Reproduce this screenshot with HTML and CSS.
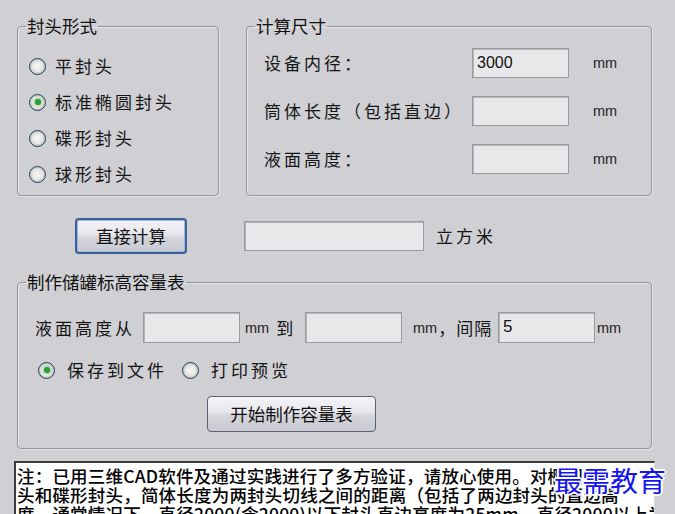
FILE: index.html
```html
<!DOCTYPE html>
<html lang="zh-CN">
<head>
<meta charset="utf-8">
<title>储罐容量计算</title>
<link rel="stylesheet" href="styles.css">
</head>
<body>
<div class="app">
  <div class="top">
    <fieldset class="grp grp-head">
      <legend>封头形式</legend>
      <div class="radios">
        <label class="radio"><span class="dot"></span><span class="rtext">平封头</span></label>
        <label class="radio"><span class="dot on"></span><span class="rtext">标准椭圆封头</span></label>
        <label class="radio"><span class="dot"></span><span class="rtext">碟形封头</span></label>
        <label class="radio"><span class="dot"></span><span class="rtext">球形封头</span></label>
      </div>
    </fieldset>
    <fieldset class="grp grp-size">
      <legend>计算尺寸</legend>
      <div class="size-grid">
        <span class="lbl">设备内径：</span><span class="inp">3000</span><span class="unit">mm</span>
        <span class="lbl">筒体长度（包括直边）</span><span class="inp"></span><span class="unit">mm</span>
        <span class="lbl">液面高度：</span><span class="inp"></span><span class="unit">mm</span>
      </div>
    </fieldset>
  </div>

  <div class="calc-row">
    <button class="btn btn-default">直接计算</button>
    <span class="inp out"></span>
    <span class="lbl">立方米</span>
  </div>

  <fieldset class="grp grp-table">
    <legend>制作储罐标高容量表</legend>
    <div class="table-body">
      <div class="range-row">
        <span class="lbl">液面高度从</span>
        <span class="inp"></span>
        <span class="mm-to"><span class="unit">mm</span> <span class="cn">到</span></span>
        <span class="inp inp2"></span>
        <span class="mm-sep"><span class="unit">mm</span><span class="cn">，间隔</span></span>
        <span class="inp inp3">5</span>
        <span class="unit unit-end">mm</span>
      </div>
      <div class="opt-row">
        <label class="radio"><span class="dot on"></span><span class="rtext">保存到文件</span></label>
        <label class="radio"><span class="dot"></span><span class="rtext">打印预览</span></label>
      </div>
      <div class="make-row">
        <button class="btn">开始制作容量表</button>
      </div>
    </div>
  </fieldset>

  <div class="note">注：已用三维CAD软件及通过实践进行了多方验证，请放心使用。对椭圆封<br>头和碟形封头，简体长度为两封头切线之间的距离（包括了两边封头的直边高<br>度，通常情况下，直径2000(含2000)以下封头直边高度为25mm，直径2000以上为40mm）。</div>

  <div class="watermark">最需教育</div>
</div>
</body>
</html>
```

FILE: styles.css
```css
* { box-sizing: border-box; }

html, body {
  margin: 0;
  padding: 0;
  background: #cfcfd4;
  overflow: hidden;
}

.app {
  position: relative;
  width: 675px;
  height: 514px;
  overflow: hidden;
  font-family: "Noto Sans CJK SC", "Noto Sans", sans-serif;
  color: #141414;
}

/* ---------- group boxes ---------- */
.grp {
  margin: 0;
  min-width: 0;
  padding: 0;
  border: 1px solid #94949a;
  border-radius: 4px;
  box-shadow: 1px 1px 0 #e4e4e8, inset 1px 1px 0 #e4e4e8;
}

.grp legend {
  font-size: 17.5px;
  line-height: 18px;
  padding: 0 1px;
  margin-left: 8px;
  color: #111;
}

.top {
  display: flex;
  align-items: stretch;
  gap: 27px;
  padding: 17px 0 0 17px;
}

.grp-head {
  width: 202px;
}

.radios {
  display: flex;
  flex-direction: column;
  padding: 13px 0 3px 11px;
}

.radio {
  display: flex;
  align-items: center;
  gap: 9px;
  height: 36px;
}

.rtext {
  font-size: 17px;
  letter-spacing: 3px;
  line-height: 20px;
}

.dot {
  position: relative;
  flex: none;
  width: 17px;
  height: 17px;
  border-radius: 50%;
  border: 1.6px solid #28405a;
  background: radial-gradient(circle at 50% 50%, #f6f6f2 0, #e8e8e4 45%, #c4c8c6 100%);
  box-shadow: inset 0 0 2px #8e9aa6;
}

.dot.on::after {
  content: "";
  position: absolute;
  left: 50%;
  top: 50%;
  width: 6px;
  height: 6px;
  margin: -3px 0 0 -3px;
  border-radius: 50%;
  background: #2f9a3a;
  box-shadow: 0 0 2px 1px #8fd08f;
}

.grp-size {
  width: 406px;
}

.size-grid {
  display: grid;
  grid-template-columns: 208px 97px auto;
  column-gap: 0;
  row-gap: 18px;
  align-items: center;
  padding: 13px 0 20px 17px;
}

.size-grid .unit {
  margin-left: 24px;
}

.lbl {
  font-size: 17px;
  letter-spacing: 3px;
  line-height: 20px;
  white-space: nowrap;
}

.inp {
  display: block;
  height: 30px;
  width: 97px;
  background: #e8e8ea;
  border: 1px solid #9b9b9f;
  box-shadow: inset 1px 1px 0 #b4b4b8;
  font-family: "Liberation Sans", Arial, sans-serif;
  font-size: 16px;
  line-height: 28px;
  padding: 0 4px;
  color: #111;
}

.unit {
  font-family: "Liberation Sans", Arial, sans-serif;
  font-size: 14.5px;
  color: #222;
}

/* ---------- calc row ---------- */
.calc-row {
  display: flex;
  align-items: center;
  margin-top: 22px;
  padding-left: 75px;
}

.btn {
  font-family: "Noto Sans CJK SC", sans-serif;
  font-size: 17.5px;
  line-height: 20px;
  color: #111;
  border-radius: 4px;
  background: linear-gradient(#f4f4f7 0%, #e6e6ec 45%, #d4d4dc 55%, #c9c9d3 100%);
  border: 1px solid #5d6272;
  padding: 0;
  cursor: pointer;
}

.btn-default {
  width: 112px;
  height: 36px;
  border: 2px solid #3a5f9a;
  box-shadow: inset 0 0 0 1px #9fb8de;
}

.out {
  width: 180px;
  height: 30px;
  margin-left: 57px;
}

.calc-row .lbl {
  margin-left: 12px;
}

/* ---------- table group ---------- */
.grp-table {
  width: 635px;
  margin: 19px 0 0 17px;
}

.table-body {
  padding: 21px 0 16px 17px;
}

.range-row {
  display: flex;
  align-items: center;
}

.range-row .inp {
  height: 31px;
}

.range-row .lbl {
  width: 102px;
  margin-right: 6px;
}

.mm-to {
  margin-left: 5px;
  width: 60px;
  display: flex;
  align-items: center;
}

.mm-to .cn {
  margin-left: 7px;
}

.cn {
  font-size: 17px;
  line-height: 20px;
}

.mm-sep {
  margin-left: 11px;
  display: flex;
  align-items: center;
  width: 85px;
}

.mm-sep .cn {
  margin-left: 1px;
  letter-spacing: 1px;
}

.inp3 {
  font-size: 17px;
}

.unit-end {
  margin-left: 2px;
}

.opt-row {
  display: flex;
  align-items: center;
  margin-top: 15px;
  padding-left: 3px;
  gap: 15px;
}

.opt-row .radio {
  height: 24px;
  gap: 12px;
}

.make-row {
  margin-top: 14px;
  padding-left: 172px;
}

.make-row .btn {
  width: 169px;
  height: 36px;
}

/* ---------- note ---------- */
.note {
  margin: 12px 0 0 14px;
  width: 641px;
  height: 80px;
  background: #ffffff;
  border-top: 2px solid #3c3c3c;
  border-left: 2px solid #3c3c3c;
  border-right: 1px solid #d8d8d8;
  padding: 3px 4px 0 1px;
  font-size: 17.5px;
  font-weight: 500;
  letter-spacing: 0.2px;
  line-height: 19px;
  color: #000;
  white-space: nowrap;
  overflow: hidden;
}

/* ---------- watermark (overlay) ---------- */
.watermark {
  position: absolute;
  left: 554px;
  top: 462px;
  font-size: 28px;
  line-height: 36px;
  color: #1414f0;
  text-shadow:
    2px 0 0 #fff, -2px 0 0 #fff, 0 2px 0 #fff, 0 -2px 0 #fff,
    1px 1px 0 #fff, -1px -1px 0 #fff, 1px -1px 0 #fff, -1px 1px 0 #fff;
}
```
